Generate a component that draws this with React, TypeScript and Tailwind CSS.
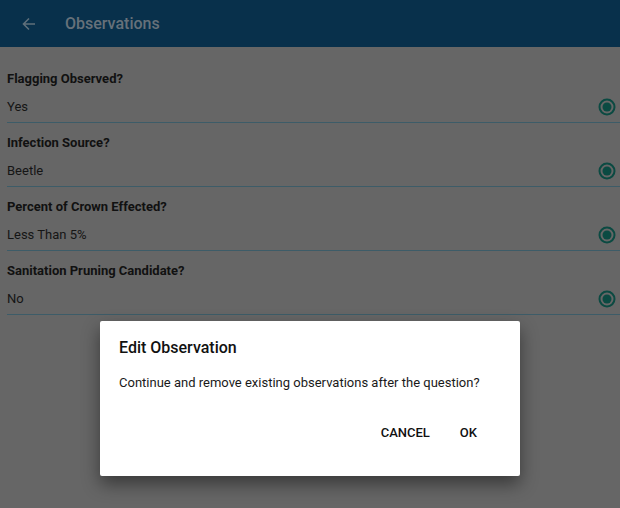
import React from 'react';

const questions = [
  { label: 'Flagging Observed?', value: 'Yes' },
  { label: 'Infection Source?', value: 'Beetle' },
  { label: 'Percent of Crown Effected?', value: 'Less Than 5%' },
  { label: 'Sanitation Pruning Candidate?', value: 'No' },
];

const RadioOn: React.FC = () => (
  <svg width="20" height="20" viewBox="0 0 20 20">
    <circle cx="10" cy="10" r="7.5" fill="none" stroke="#0b4a42" strokeWidth="2" />
    <circle cx="10" cy="10" r="4.5" fill="#0b4a42" />
  </svg>
);

const App: React.FC = () => {
  return (
    <div className="relative w-[620px] h-[508px] overflow-hidden bg-[#666666] font-['Roboto',sans-serif]">
      {/* Header */}
      <div className="h-[47px] bg-[#08304b] flex items-center">
        <svg className="ml-[22px]" width="14" height="14" viewBox="0 0 14 14">
          <path d="M13 7H1.5M7 1.5L1.5 7L7 12.5" fill="none" stroke="#5f6f7a" strokeWidth="1.6" />
        </svg>
        <h1 className="ml-[29px] text-[16px] font-medium text-[#66717a]">Observations</h1>
      </div>

      {/* Questions */}
      <div className="pt-[12px]">
        {questions.map((q) => (
          <div key={q.label} className="ml-[7px] pt-[10px] pb-[5px] border-b border-[#3d5c68]">
            <div className="h-[20px] leading-[20px] text-[13px] font-bold text-[#111111]">{q.label}</div>
            <div className="mt-[8px] h-[20px] flex items-center justify-between">
              <span className="text-[13px] text-[#151515]">{q.value}</span>
              <span className="mr-[3px]">
                <RadioOn />
              </span>
            </div>
          </div>
        ))}
      </div>

      {/* Dialog */}
      <div className="absolute left-[100px] top-[321px] w-[420px] h-[155px] bg-white rounded-[2px] shadow-[0_8px_18px_rgba(0,0,0,0.45)]">
        <div className="pl-[19px] pt-[16px] text-[16px] font-medium text-[#111111] leading-[22px]">Edit Observation</div>
        <div className="pl-[19px] mt-[14px] text-[13px] text-[#1a1a1a] leading-[20px]">
          Continue and remove existing observations after the question?
        </div>
        <div className="mt-[30px] flex justify-end pr-[43px] gap-[30px] text-[13px] font-medium text-[#111111] leading-[20px]">
          <button>CANCEL</button>
          <button>OK</button>
        </div>
      </div>
    </div>
  );
};

export default App;
